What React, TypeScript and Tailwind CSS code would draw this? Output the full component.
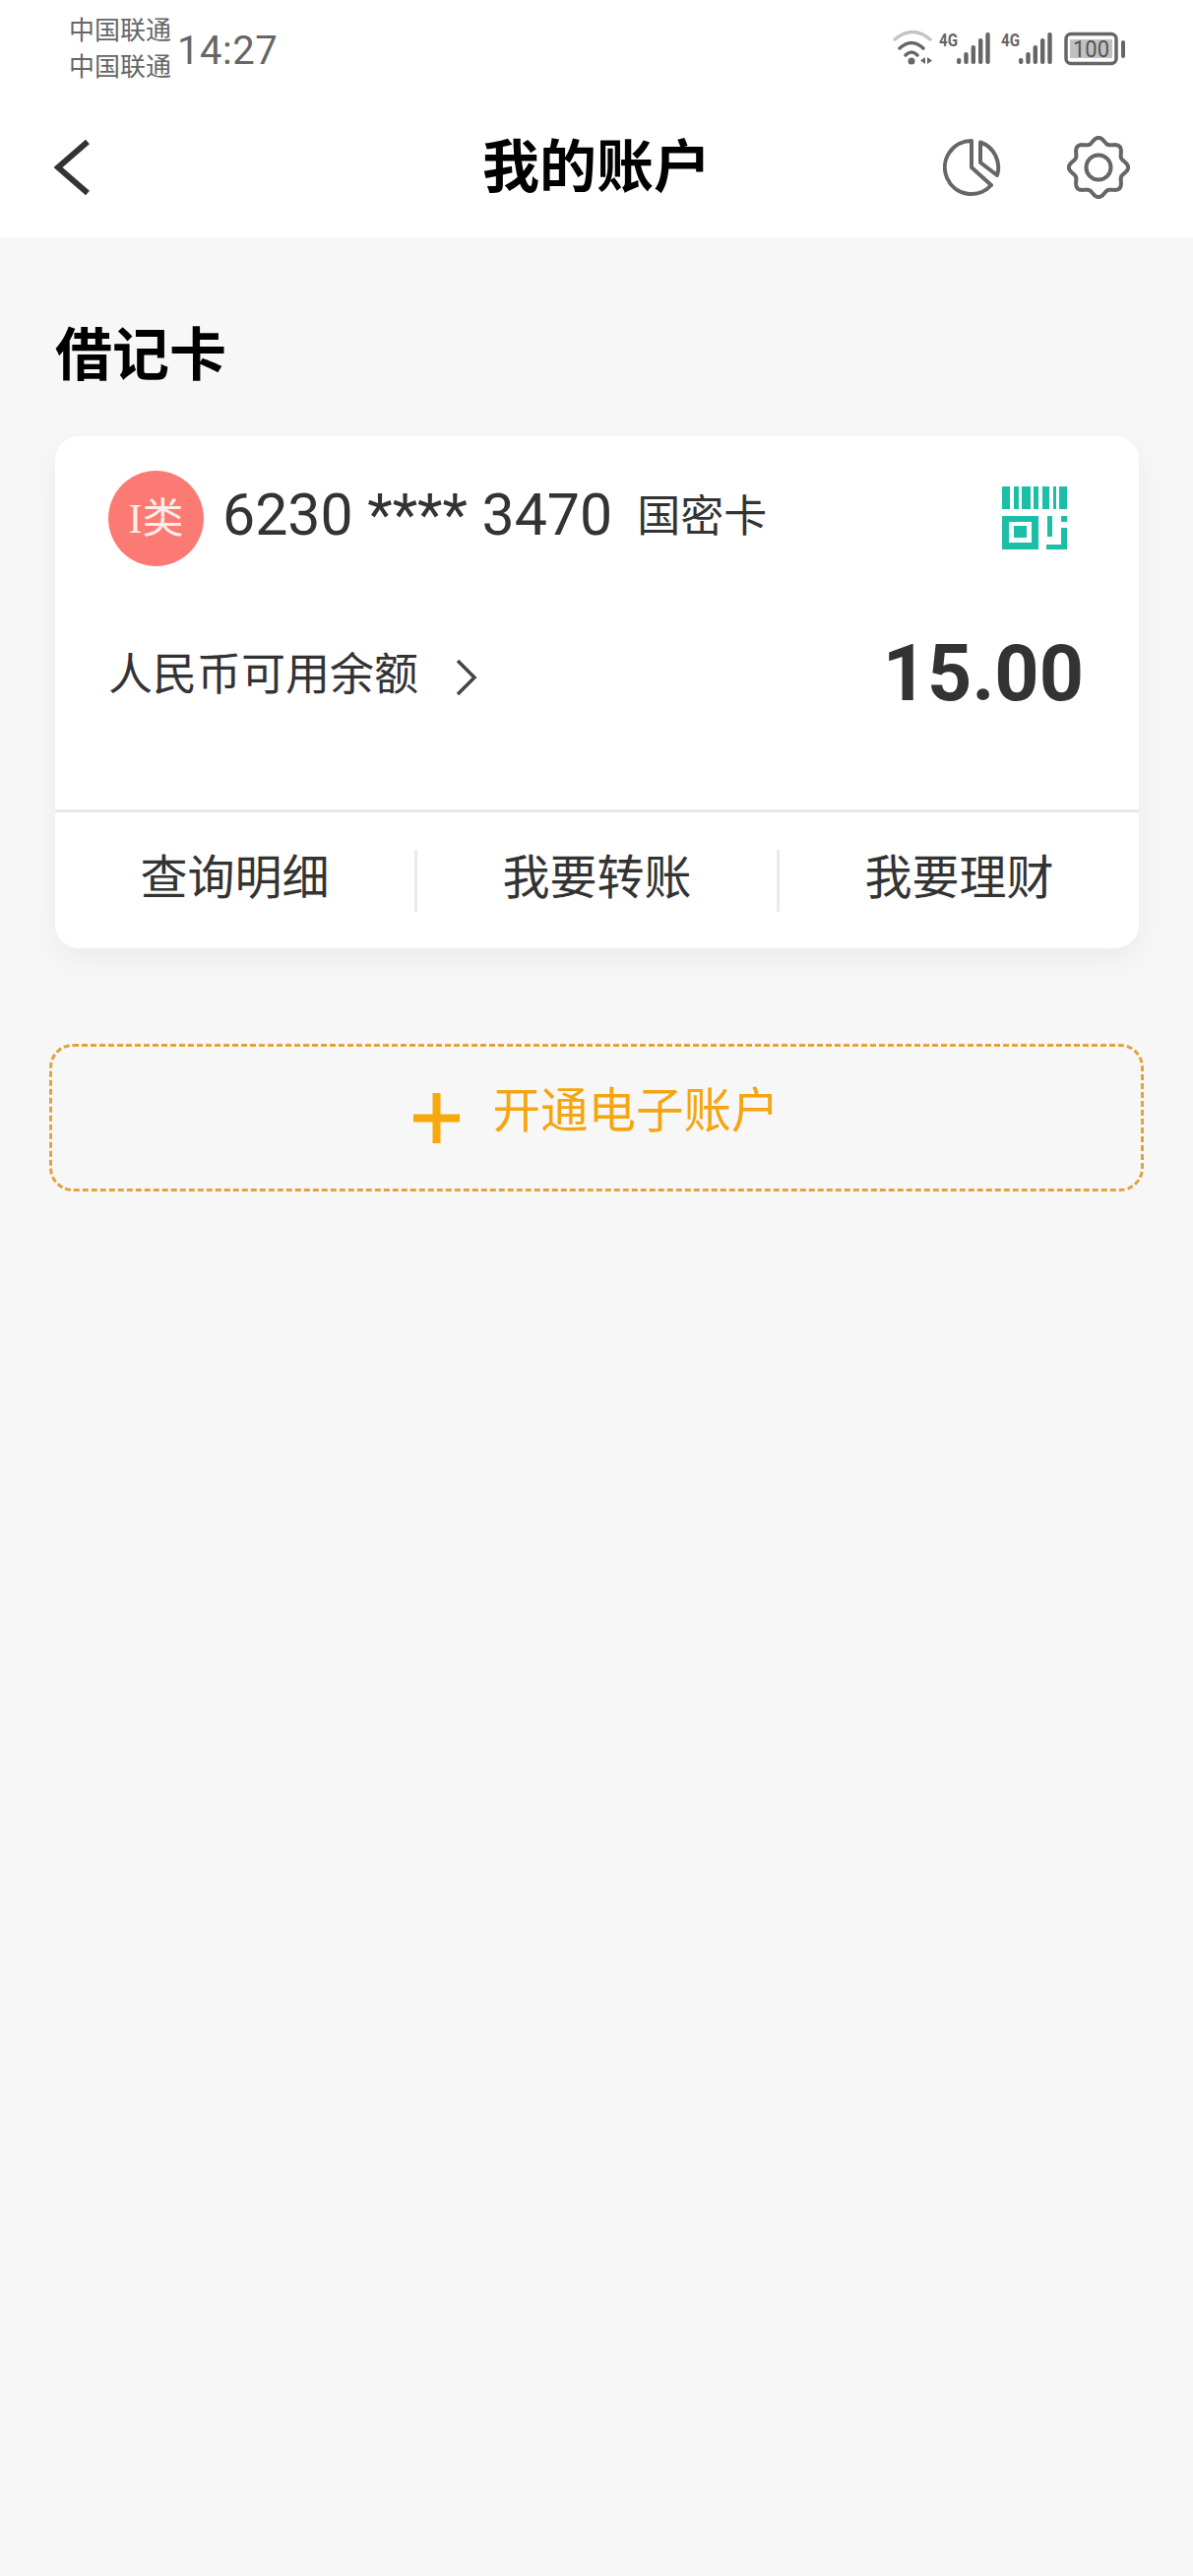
import React from 'react';

const cjk = { fontFamily: 'Roboto, "Noto Sans CJK SC", sans-serif' };

// wavy outline for the settings icon
const gearPath = () => {
  const pts: string[] = [];
  for (let i = 0; i < 160; i++) {
    const a = (i / 160) * Math.PI * 2;
    const r = 27.5 + 2.6 * Math.cos(8 * a);
    const x = 32 + r * Math.sin(a);
    const y = 32 - r * Math.cos(a);
    pts.push(`${i === 0 ? 'M' : 'L'}${x.toFixed(2)} ${y.toFixed(2)}`);
  }
  return pts.join(' ') + ' Z';
};

function SignalBars({ x }: { x: number }) {
  return (
    <g fill="#666666">
      <text x={x} y={22} fontSize="18" fontWeight="700" fontFamily="Roboto, sans-serif" textLength="19" lengthAdjust="spacingAndGlyphs">4G</text>
      <rect x={x + 18} y={34} width="4.4" height="6" rx="2" />
      <rect x={x + 25.3} y={28} width="4.4" height="12" rx="2" />
      <rect x={x + 32.6} y={21} width="4.4" height="19" rx="2" />
      <rect x={x + 40} y={14} width="4.4" height="26" rx="2" />
      <rect x={x + 47.3} y={8} width="4.4" height="32" rx="2" />
    </g>
  );
}

function StatusIcons() {
  return (
    <svg width="250" height="50" viewBox="0 0 250 50" className="shrink-0">
      <path d="M9 15 Q27 0 45 15" fill="none" stroke="#c4c4c4" strokeWidth="3.5" strokeLinecap="round" />
      <path d="M14 24 Q26 13 38 24" fill="none" stroke="#666666" strokeWidth="3.5" strokeLinecap="round" />
      <path d="M20 31 Q26 25 32 31" fill="none" stroke="#666666" strokeWidth="3.5" strokeLinecap="round" />
      <circle cx="26" cy="37" r="3.5" fill="#666666" />
      <path d="M40 33 V40 L35 36.5 Z M42 33 V40 L47 36.5 Z" fill="#666666" />
      <SignalBars x={54} />
      <SignalBars x={117} />
      <rect x="183" y="9.5" width="51" height="30" rx="5" fill="none" stroke="#666666" strokeWidth="3.5" />
      <rect x="187" y="15" width="43" height="19" fill="#c0c0c0" />
      <text x="190" y="33" fontSize="23" fontFamily="Roboto, sans-serif" fill="#555555" textLength="37" lengthAdjust="spacingAndGlyphs">100</text>
      <rect x="239" y="16" width="4" height="18" rx="2" fill="#666666" />
    </svg>
  );
}

function BarcodeIcon() {
  return (
    <svg width="67" height="64" viewBox="0 0 67 64" fill="#1cbfa6">
      <rect x="0" y="0" width="8" height="23" />
      <rect x="12" y="0" width="5" height="23" />
      <rect x="20" y="0" width="9" height="23" />
      <rect x="32" y="0" width="5" height="23" />
      <rect x="41" y="0" width="7" height="23" />
      <rect x="52" y="0" width="3" height="23" />
      <rect x="58" y="0" width="8" height="23" />
      <path fillRule="evenodd" d="M0 30 H37 V64 H0 Z M7 36 V57 H30 V36 Z" />
      <rect x="12" y="40" width="13" height="12" />
      <rect x="46" y="30" width="5" height="21" />
      <rect x="60" y="30" width="6" height="6" />
      <path d="M60 42 H66 V64 H45 V59 H60 Z" />
    </svg>
  );
}

const actions = ['查询明细', '我要转账', '我要理财'];

export default function App() {
  return (
    <div className="w-[1212px] h-[2616px] bg-[#f7f7f7] overflow-hidden" style={cjk}>
      <div className="bg-white h-[241px]">
        <div className="h-[100px] pl-[70px] pr-[62px] flex items-center">
          <div className="text-[26px] leading-[37px] text-[#666666] w-[110px]">
            <div>中国联通</div>
            <div>中国联通</div>
          </div>
          <div className="text-[40px] text-[#666666] leading-none pt-[3px] tracking-[0.5px]">14:27</div>
          <div className="flex-1" />
          <StatusIcons />
        </div>
        <div className="h-[141px] relative flex items-center pl-[55px] pr-[64px] pb-[2px]">
          <svg width="36" height="56" viewBox="0 0 36 56" fill="none" stroke="#333333" strokeWidth="6">
            <path d="M34 2 L4 28 L34 54" />
          </svg>
          <div className="absolute left-0 right-0 text-center text-[58px] font-bold text-black leading-none">我的账户</div>
          <div className="flex-1" />
          <svg width="60" height="60" viewBox="0 0 60 60" fill="none" stroke="#666666" strokeWidth="4" strokeLinejoin="round" className="mr-[66px]">
            <path d="M29 3 A27 27 0 1 0 49 48 L29 30 Z" />
            <path d="M38 4.5 A27 27 0 0 1 55 38 L38 25 Z" />
          </svg>
          <svg width="64" height="64" viewBox="0 0 64 64" fill="none" stroke="#666666" strokeWidth="4">
            <path d={gearPath()} />
            <circle cx="32" cy="32" r="12.5" />
          </svg>
        </div>
      </div>

      <div className="px-[56px] pt-[91px]">
        <div className="text-[58px] leading-[58px] font-bold text-black">借记卡</div>

        <div className="mt-[53px] w-[1101px] h-[520px] bg-white rounded-[24px] shadow-[0_12px_30px_rgba(0,0,0,0.05)] flex flex-col">
          <div className="h-[382px] pl-[54px] pr-[52px] border-b-[3px] border-[#e8e8e8]">
            <div className="pt-[35px] flex items-start">
              <div className="w-[97px] h-[97px] rounded-full bg-[#fb7a73] flex items-center justify-center text-[#fdeeea] text-[42px] leading-none">
                <span style={{ fontFamily: '"Liberation Serif", "Noto Sans CJK SC", serif' }}>I类</span>
              </div>
              <div className="ml-[19px] h-[97px] flex items-center text-[#333333] text-[59px] leading-none pb-[8px]">6230 **** 3470</div>
              <div className="ml-[25px] h-[97px] flex items-center text-[#333333] text-[44px] leading-none pb-[4px]">国密卡</div>
              <div className="flex-1" />
              <div className="pt-[16px] pr-[20px]">
                <BarcodeIcon />
              </div>
            </div>
            <div className="mt-[63px] flex items-center h-[100px]">
              <div className="text-[#333333] text-[45px] leading-none pb-[6px]">人民币可用余额</div>
              <svg width="22" height="38" viewBox="0 0 22 38" fill="none" stroke="#444444" strokeWidth="3.5" className="ml-[38px]">
                <path d="M2 2 L19 19 L2 36" />
              </svg>
              <div className="flex-1" />
              <div className="text-[#333333] text-[79px] font-bold leading-none pb-[8px] mr-[4px]">15.00</div>
            </div>
          </div>
          <div className="flex-1 flex items-center">
            {actions.map((label, i) => (
              <React.Fragment key={label}>
                {i > 0 && <div className="w-[3px] h-[63px] bg-[#ebebeb] shrink-0" />}
                <div className="flex-1 text-center text-[#333333] text-[48px] leading-none pb-[4px]">{label}</div>
              </React.Fragment>
            ))}
          </div>
        </div>

        <div className="mt-[97px] -mx-[6px] w-[1112px] h-[150px] rounded-[24px] border-[3px] border-dashed border-[#e2a33c] flex items-center justify-center">
          <svg width="47" height="51" viewBox="0 0 47 51" fill="#f7a80d" className="shrink-0">
            <rect x="19.5" y="0" width="8" height="51" />
            <rect x="0" y="21.5" width="47" height="8" />
          </svg>
          <div className="ml-[33px] text-[#f5a50f] text-[48.5px] leading-none pb-[11px]">开通电子账户</div>
        </div>
      </div>
    </div>
  );
}
